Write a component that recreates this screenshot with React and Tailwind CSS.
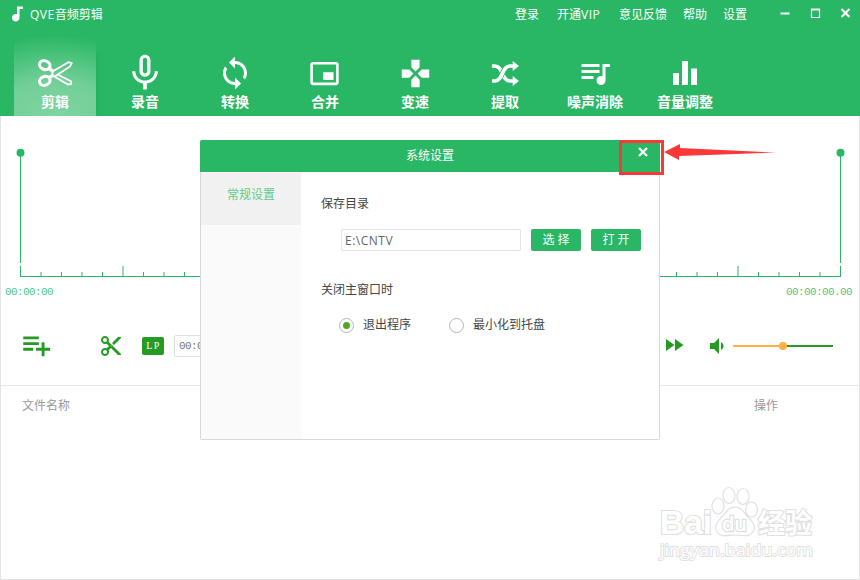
import { useState } from 'react'
import {
  MdAudiotrack, MdMicNone, MdSync, MdPictureInPictureAlt, MdGamepad, MdQueueMusic,
  MdEqualizer, MdPlaylistAdd, MdContentCut, MdFastForward, MdVolumeDown,
} from 'react-icons/md'

function ScissorsIcon({ className }) {
  return (
    <svg viewBox="0 0 36 30" className={className} fill="none" stroke="currentColor">
      <ellipse cx="7.8" cy="7.2" rx="5.4" ry="4.3" strokeWidth="3" transform="rotate(20 7.8 7.2)" />
      <ellipse cx="7.8" cy="22.8" rx="5.4" ry="4.3" strokeWidth="3" transform="rotate(-20 7.8 22.8)" />
      <path d="M12 10.5L16.5 13.6M12 19.5L17 17" strokeWidth="3.4" />
      <path d="M16 13.2L31.5 4.2L34.6 5L33 8.4L18.5 18L14.5 18.2z" strokeWidth="1.8" />
      <path d="M21.5 17L34 23.3L34.2 26L31 26.5L17.5 18.6" strokeWidth="1.8" />
    </svg>
  )
}

function ShuffleIcon({ className }) {
  return (
    <svg viewBox="0 0 30 26" className={className}>
      <g fill="none" stroke="currentColor" strokeWidth="3.8">
        <path d="M1 5.2H4C12.5 5.2 11 20.8 19.5 20.8H23" />
        <path d="M10 16.5L13.5 9.5" stroke="#29b765" strokeWidth="5.4" />
        <path d="M1 20.8H4C12.5 20.8 11 5.2 19.5 5.2H23" />
      </g>
      <path fill="currentColor" d="M22.5 0L29 5.2L22.5 10.4zM22.5 15.6L29 20.8L22.5 26z" />
    </svg>
  )
}

const tools = [
  { id: 'cut', label: '剪辑', icon: ScissorsIcon, size: 'w-9 h-[30px]' },
  { id: 'record', label: '录音', icon: MdMicNone, size: 'w-11 h-11' },
  { id: 'convert', label: '转换', icon: MdSync, size: 'w-9 h-9' },
  { id: 'merge', label: '合并', icon: MdPictureInPictureAlt, size: 'w-[31px] h-[31px] mr-px' },
  { id: 'speed', label: '变速', icon: MdGamepad, size: 'w-[33px] h-[33px]' },
  { id: 'extract', label: '提取', icon: ShuffleIcon, size: 'w-[29px] h-[25px]' },
  { id: 'denoise', label: '噪声消除', icon: MdQueueMusic, size: 'w-9 h-9 mr-px' },
  { id: 'volume', label: '音量调整', icon: MdEqualizer, size: 'w-9 h-9 mr-px' },
]

const closeOptions = [
  { value: 'exit', label: '退出程序', width: 'w-[110px]' },
  { value: 'tray', label: '最小化到托盘', width: 'w-[120px]' },
]

function Header({ active, onSelect }) {
  return (
    <header className="h-[116px] shrink-0 bg-[#29b765] text-white flex flex-col overflow-hidden">
      <div className="h-7 flex items-center pl-[7px] pr-[9px] text-xs leading-none">
        <MdAudiotrack className="w-5 h-5" />
        <span className="ml-[3px] mr-auto pt-px"><span className="tracking-[0.5px]">QVE</span>音频剪辑</span>
        <nav className="flex items-center w-[264px] pt-px">
          <span className="w-[42px]">登录</span>
          <span className="w-[62px]">开通<span className="tracking-[0.5px]">VIP</span></span>
          <span className="w-16">意见反馈</span>
          <span className="w-10">帮助</span>
          <span>设置</span>
        </nav>
        <svg viewBox="0 0 72 12" className="w-[72px] h-3 -mt-0.5" fill="none" stroke="#fff">
          <path d="M1.5 6.5H10.5" strokeWidth="2" />
          <path d="M32.5 2.5H40.5V10.5H32.5z" strokeWidth="1.2" />
          <path d="M32 2.5H41" strokeWidth="2" />
          <path d="M62.5 2L70.5 10M70.5 2L62.5 10" strokeWidth="2.2" />
        </svg>
      </div>

      <div className="flex h-[88px] pl-2.5">
        {tools.map(({ id, label, icon: Icon, size }) => (
          <button
            key={id}
            onClick={() => onSelect(id)}
            className="w-[90px] flex justify-center pt-[7px]"
          >
            <span
              className={`w-[82px] h-[81px] flex flex-col items-center pt-4 ${
                active === id
                  ? 'bg-[radial-gradient(ellipse_150%_100%_at_50%_100%,#80d4a1_0%,#72cf97_45%,#29b765_100%)] shadow-[4px_14px_6px_-5px_rgba(0,80,30,0.2)]'
                  : ''
              }`}
            >
              <span className="h-11 flex items-center justify-center">
                <Icon className={size} />
              </span>
              <span className="text-sm leading-[14px] font-semibold whitespace-nowrap">{label}</span>
            </span>
          </button>
        ))}
      </div>
    </header>
  )
}

function Timeline() {
  const ticks = Array.from({ length: 39 }, (_, i) => i + 1)
  return (
    <section className="h-[189px] shrink-0 pt-8">
      <svg viewBox="0 0 858 132" className="w-[858px] h-[132px]" shapeRendering="crispEdges">
        <g fill="#29b765">
          <rect x="19" y="4" width="1" height="111" />
          <rect x="839" y="4" width="1" height="111" />
          <rect x="19" y="118" width="1" height="11" />
          <rect x="839" y="118" width="1" height="11" />
          <rect x="19" y="128" width="821" height="1" />
          {ticks.map((i) => {
            const height = i % 10 === 5 ? 10 : 4
            const half = i % 2 === 1
            return (
              <rect
                key={i}
                x={Math.floor(19 + i * 20.5)}
                y={128 - height}
                width={half ? 2 : 1}
                height={height}
                opacity={half ? 0.5 : 1}
              />
            )
          })}
          <circle cx="19.5" cy="4.8" r="4" shapeRendering="auto" />
          <circle cx="839.5" cy="4.8" r="4" shapeRendering="auto" />
        </g>
      </svg>
      <div className="flex justify-between pl-1 pr-[7px] pt-1.5 font-['Liberation_Mono'] text-[11px] leading-3 tracking-[-0.6px] text-[#54c584]">
        <span>00:00:00</span>
        <span>00:00:00.00</span>
      </div>
    </section>
  )
}

function Controls() {
  return (
    <section className="h-[81px] shrink-0 flex items-center border-b border-[#e6e6e6] pl-[18px] pt-0.5 text-[#259b24]">
      <MdPlaylistAdd className="w-[34px] h-[34px] -mt-0.5" />
      <MdContentCut className="w-6 h-6 ml-[46px]" />
      <span className="ml-[19px] w-[22px] h-[18px] rounded-xs bg-[#259b24] text-white font-['Liberation_Serif'] text-[10px] leading-[18px] tracking-[1.5px] text-center pl-px">
        LP
      </span>
      <span className="ml-2.5 w-[90px] h-[22px] border border-[#e0e0e0] rounded-xs pl-1 font-['Liberation_Mono'] text-[11px] leading-5 tracking-[-0.6px] text-[#777]">
        00:00:00.00
      </span>
      <MdFastForward className="w-6 h-6 ml-auto -mt-0.5" />
      <MdVolumeDown className="w-6 h-6 ml-[19px]" />
      <div className="flex items-center w-[100px] ml-1 mr-[26px]">
        <span className="w-[46px] h-0.5 bg-[#ffb042]" />
        <span className="w-2 h-2 rounded-full bg-[#ffb042]" />
        <span className="flex-1 h-0.5 bg-[#259b24]" />
      </div>
    </section>
  )
}

function SettingsDialog() {
  const [dir, setDir] = useState('E:\\CNTV')
  const [onClose, setOnClose] = useState('exit')

  return (
    <div className="absolute left-[200px] top-[140px] w-[460px] h-[300px] bg-white border border-t-0 border-[#d8d8d8] rounded-xs flex flex-col text-xs text-[#444]">
      <div className="-mx-px h-8 shrink-0 bg-[#29b765] rounded-t-xs text-white grid grid-cols-[1fr_auto_1fr] items-center">
        <span />
        <span>系统设置</span>
        <svg viewBox="0 0 10 10" className="w-2.5 h-2.5 justify-self-end mr-3 -mt-2" stroke="#fff" strokeWidth="2.2">
          <path d="M1 1L9 9M9 1L1 9" />
        </svg>
      </div>

      <div className="flex flex-1">
        <aside className="w-[100px] bg-[#fafafa] pt-px">
          <div className="h-[52px] bg-[#f1f1f1] text-[#5ecb8c] text-center leading-[44px]">常规设置</div>
        </aside>

        <div className="flex-1 pl-5 pt-[23px]">
          <h3 className="h-[18px] leading-[18px]">保存目录</h3>
          <div className="flex items-center gap-2.5 pl-5 mt-4">
            <input
              value={dir}
              onChange={(e) => setDir(e.target.value)}
              className="w-[180px] h-[22px] border border-[#dfe4e8] rounded-xs px-[3px] text-[#666] tracking-[0.5px] outline-none"
            />
            <button className="w-[50px] h-[22px] rounded-xs bg-[#29b765] text-white">选 择</button>
            <button className="w-[50px] h-[22px] rounded-xs bg-[#29b765] text-white">打 开</button>
          </div>

          <h3 className="h-[18px] leading-[18px] mt-[30px]">关闭主窗口时</h3>
          <div className="flex pl-[18px] mt-[17px]">
            {closeOptions.map(({ value, label, width }) => (
              <label key={value} className={`${width} flex items-center whitespace-nowrap`}>
                <input
                  type="radio"
                  name="onClose"
                  className="sr-only"
                  checked={onClose === value}
                  onChange={() => setOnClose(value)}
                />
                <span className="w-[15px] h-[15px] rounded-full border border-[#b5b5b5] bg-white flex items-center justify-center">
                  {onClose === value && <span className="w-[7px] h-[7px] rounded-full bg-[#4fa81e]" />}
                </span>
                <span className="ml-[9px] leading-[18px]">{label}</span>
              </label>
            ))}
          </div>
        </div>
      </div>
    </div>
  )
}

function CloseHint() {
  return (
    <div className="absolute left-[619px] top-[140px] flex items-start">
      <div className="w-[45px] h-[35px] border-3 border-[#fb3838]" />
      <svg viewBox="0 0 114 18" className="w-[114px] h-[18px] mt-[3px]">
        <path d="M0 9L16 1V5L112 9.6L15 13V17z" fill="#fb3838" />
      </svg>
    </div>
  )
}

function Watermark() {
  return (
    <svg
      viewBox="0 0 160 80"
      className="absolute left-[656px] top-[484px] w-40 h-20"
      fill="#fff"
      stroke="#e0e0e0"
      strokeWidth="1.2"
    >
      <g fontFamily="'Liberation Sans', sans-serif" fontWeight="bold" paintOrder="stroke" strokeWidth="2.2">
        <text x="4" y="50" fontSize="34" textLength="52" lengthAdjust="spacingAndGlyphs">Bai</text>
        <text x="102" y="49" fontSize="27" textLength="54" fontFamily="'Noto Sans CJK SC', sans-serif">经验</text>
        <text x="4" y="72" fontSize="17" fontFamily="'Open Sans', sans-serif" fontWeight="500" strokeWidth="1.8" textLength="153" lengthAdjust="spacingAndGlyphs">
          jingyan.baidu.com
        </text>
      </g>
      <ellipse cx="62" cy="22" rx="6" ry="8" />
      <ellipse cx="73" cy="11.5" rx="6" ry="8" />
      <ellipse cx="87" cy="12.5" rx="6" ry="8" />
      <ellipse cx="95.5" cy="25.5" rx="6" ry="7.5" />
      <path d="M79 23C86 23 88 29 92 33C98 38 100 44 97 48C93 54 86 51 79 51C72 51 65 54 61 48C58 43 61 37 66 33C70 29 72 23 79 23z" />
      <text x="66" y="47" fontSize="20" fontFamily="'Open Sans', sans-serif" fontWeight="600" paintOrder="stroke" strokeWidth="2.4" textLength="25" lengthAdjust="spacingAndGlyphs">
        du
      </text>
    </svg>
  )
}

export default function App() {
  const [active, setActive] = useState('cut')

  return (
    <div className="relative w-[860px] h-[580px] overflow-hidden bg-white flex flex-col font-['Open_Sans','Noto_Sans_CJK_SC',sans-serif]">
      <Header active={active} onSelect={setActive} />
      <main className="flex-1 flex flex-col border border-t-0 border-[#e3e3e3]">
        <Timeline />
        <Controls />
        <div className="flex justify-between pl-[21px] pr-[81px] pt-[11px] text-xs leading-[18px] text-[#999]">
          <span>文件名称</span>
          <span>操作</span>
        </div>
      </main>
      <Watermark />
      <SettingsDialog />
      <CloseHint />
    </div>
  )
}
